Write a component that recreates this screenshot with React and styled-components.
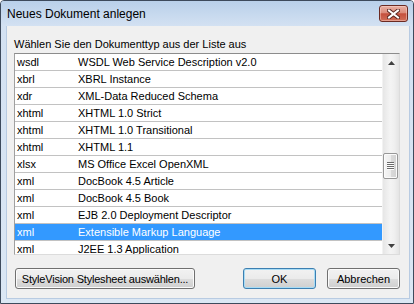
import React from "react";
import styled, { createGlobalStyle } from "styled-components";

const GlobalStyle = createGlobalStyle`
  html, body {
    margin: 0;
    padding: 0;
    background: #ffffff;
  }
  body {
    font-family: "Liberation Sans", Arial, sans-serif;
  }
`;

const Window = styled.div`
  width: 414px;
  height: 304px;
  box-sizing: border-box;
  border: 1px solid #3d4a5c;
  border-radius: 4px 4px 0 0;
  background: #cbdbee;
  display: flex;
  flex-direction: column;
  overflow: hidden;
`;

const TitleBar = styled.div`
  height: 25px;
  flex: none;
  display: flex;
  justify-content: space-between;
  align-items: center;
  padding: 0 5px 0 6px;
  background: linear-gradient(#b9d0ea, #d3e1f2);
`;

const Title = styled.span`
  font-size: 12px;
  color: #000;
`;

const CloseButton = styled.div`
  align-self: flex-start;
  margin-top: 4px;
  width: 29px;
  height: 17px;
  box-sizing: border-box;
  border: 1px solid #6b2a22;
  border-radius: 3px;
  background: linear-gradient(#e9b0a3 0%, #dc8c7b 45%, #c5503d 52%, #d06e58 100%);
  box-shadow: inset 0 0 0 1px rgba(255, 220, 210, 0.45);
  display: flex;
  align-items: center;
  justify-content: center;
`;

const Frame = styled.div`
  flex: 1;
  display: flex;
  padding: 0 4px 5px 6px;
  min-height: 0;
  background: linear-gradient(#d3e1f2, #dbe7f4);
`;

const Client = styled.div`
  flex: 1;
  background: #f0f0f0;
  display: flex;
  flex-direction: column;
  padding: 12px 9px 9px 7px;
  border: 1px solid #b8cbe2;
  border-top: none;
  margin: 0 -1px -1px -1px;
`;

const Label = styled.div`
  font-size: 11px;
  line-height: 13px;
  color: #000;
  margin-bottom: 2px;
`;

const ListBox = styled.div`
  height: 202px;
  box-sizing: border-box;
  border: 1px solid;
  border-color: #8c8c8c #dcdcdc #dcdcdc #a0a0a0;
  background: #ffffff;
  display: flex;
  overflow: hidden;
`;

const Rows = styled.div`
  flex: 1;
  overflow: hidden;
`;

const Row = styled.div`
  display: grid;
  grid-template-columns: 61px 1fr;
  height: 16px;
  line-height: 16px;
  padding-left: 2px;
  border-bottom: 1px solid #c2c2c2;
  font-size: 11px;
  white-space: nowrap;
  color: ${(p) => (p.$selected ? "#ffffff" : "#000000")};
  background: ${(p) => (p.$selected ? "#3399ff" : "transparent")};
`;

const Scrollbar = styled.div`
  width: 17px;
  flex: none;
  display: flex;
  flex-direction: column;
  background: linear-gradient(to right, #e6e6e6, #f4f4f4 45%, #f0f0f0 70%, #e4e4e4);
  border-left: 1px solid #f2f2f2;
  box-sizing: border-box;
`;

const ArrowButton = styled.div`
  height: 17px;
  flex: none;
  display: flex;
  align-items: center;
  justify-content: center;
`;

const Track = styled.div`
  flex: 1;
  padding-top: 82px;
`;

const Thumb = styled.div`
  width: 15px;
  height: 26px;
  box-sizing: border-box;
  border: 1px solid #979797;
  border-radius: 2px;
  background: linear-gradient(to right, #f6f6f6, #ececec 50%, #dadada 51%, #d2d2d2);
  box-shadow: inset 0 0 0 1px #fbfbfb;
  display: flex;
  align-items: center;
  justify-content: center;
`;

const Grip = styled.div`
  width: 7px;
  height: 8px;
  background: repeating-linear-gradient(to bottom, #6a6a6a 0 1px, #fdfdfd 1px 2px);
`;

const ButtonRow = styled.div`
  display: flex;
  align-items: center;
  margin-top: 13px;
  padding-left: 1px;
`;

const Spacer = styled.div`
  flex: 1;
`;

const Button = styled.button`
  width: ${(p) => p.$width}px;
  height: 21px;
  margin-left: ${(p) => p.$gap || 0}px;
  padding: 0;
  box-sizing: border-box;
  font-family: "Liberation Sans", Arial, sans-serif;
  font-size: 11px;
  letter-spacing: ${(p) => (p.$tight ? "-0.2px" : "0")};
  color: #000;
  border: 1px solid ${(p) => (p.$default ? "#3c7fb1" : "#707070")};
  border-radius: 3px;
  background: linear-gradient(#f2f2f2 0%, #ebebeb 50%, #dddddd 51%, #cfcfcf 100%);
  box-shadow: inset 0 0 0 1px ${(p) => (p.$default ? "#a8dcf5" : "#fbfbfb")};
  white-space: nowrap;
`;

const items = [
  ["wsdl", "WSDL Web Service Description v2.0"],
  ["xbrl", "XBRL Instance"],
  ["xdr", "XML-Data Reduced Schema"],
  ["xhtml", "XHTML 1.0 Strict"],
  ["xhtml", "XHTML 1.0 Transitional"],
  ["xhtml", "XHTML 1.1"],
  ["xlsx", "MS Office Excel OpenXML"],
  ["xml", "DocBook 4.5 Article"],
  ["xml", "DocBook 4.5 Book"],
  ["xml", "EJB 2.0 Deployment Descriptor"],
  ["xml", "Extensible Markup Language"],
  ["xml", "J2EE 1.3 Application"],
];

function CloseGlyph() {
  return (
    <svg width="13" height="10" viewBox="0 0 13 10">
      <path d="M2 1.5 L11 8.5 M11 1.5 L2 8.5" stroke="#5a2620" strokeWidth="4" strokeLinecap="square" />
      <path d="M2 1.5 L11 8.5 M11 1.5 L2 8.5" stroke="#ffffff" strokeWidth="2" strokeLinecap="square" />
    </svg>
  );
}

function Arrow({ down }) {
  return (
    <svg width="7" height="4" viewBox="0 0 7 4">
      <path d={down ? "M0 0 H7 L3.5 4 Z" : "M0 4 H7 L3.5 0 Z"} fill="#404040" />
    </svg>
  );
}

function App() {
  return (
    <>
      <GlobalStyle />
      <Window>
        <TitleBar>
          <Title>Neues Dokument anlegen</Title>
          <CloseButton>
            <CloseGlyph />
          </CloseButton>
        </TitleBar>
        <Frame>
          <Client>
            <Label>Wählen Sie den Dokumenttyp aus der Liste aus</Label>
            <ListBox>
              <Rows>
                {items.map(([ext, name], i) => (
                  <Row key={i} $selected={i === 10}>
                    <span>{ext}</span>
                    <span>{name}</span>
                  </Row>
                ))}
              </Rows>
              <Scrollbar>
                <ArrowButton>
                  <Arrow />
                </ArrowButton>
                <Track>
                  <Thumb>
                    <Grip />
                  </Thumb>
                </Track>
                <ArrowButton>
                  <Arrow down />
                </ArrowButton>
              </Scrollbar>
            </ListBox>
            <ButtonRow>
              <Button $width={180} $tight>
                StyleVision Stylesheet auswählen...
              </Button>
              <Spacer />
              <Button $width={73} $default>
                OK
              </Button>
              <Button $width={73} $gap={11}>
                Abbrechen
              </Button>
            </ButtonRow>
          </Client>
        </Frame>
      </Window>
    </>
  );
}

export default App;
